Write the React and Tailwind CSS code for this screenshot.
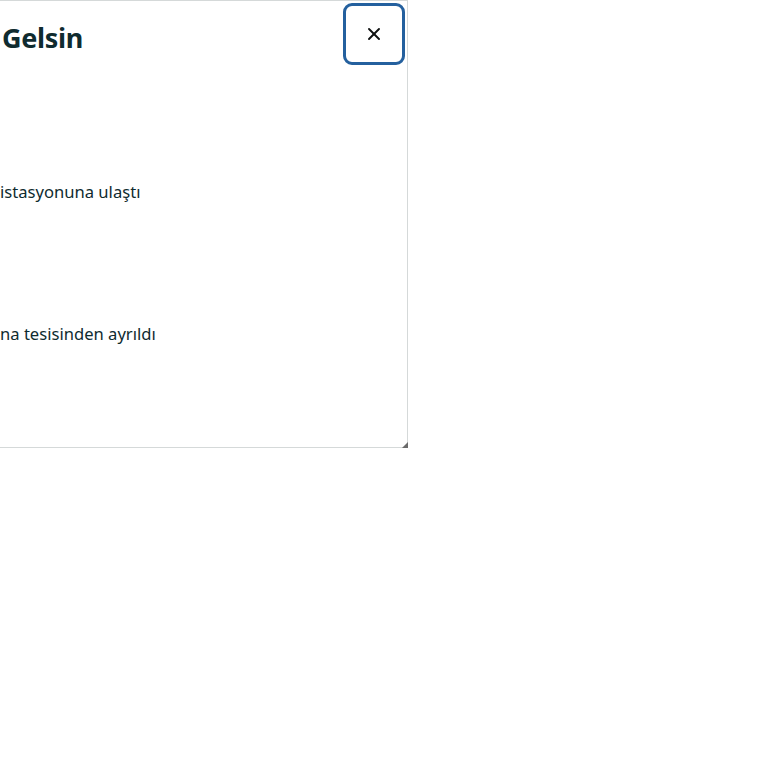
import { X } from "lucide-react";

const font = { fontFamily: '"Noto Sans", "Open Sans", Arial, sans-serif' };

const App = () => {
  return (
    <div className="w-[768px] h-[768px] bg-white" style={font}>
      <div className="relative w-[408px] h-[448px] bg-white border-t border-r border-b border-[#d5d9d9]">
        {/* başlık */}
        <div className="flex justify-between items-start pt-[2px] pr-[2px]">
          <h2 className="pt-[18px] pl-[2px] text-[27px] leading-[34px] font-bold text-[#0f2b2f] tracking-[-0.3px]">
            Gelsin
          </h2>
          <button className="w-[62px] h-[62px] flex items-center justify-center rounded-[9px] border-[3px] border-[#24609e] bg-white">
            <X className="w-[20px] h-[20px] text-[#0f1111]" strokeWidth={2.3} />
          </button>
        </div>

        {/* durumlar */}
        <div className="flex flex-col text-[16.6px] leading-[20px] text-[#0f2b2f]">
          <p className="mt-[117px]">istasyonuna ulaştı</p>
          <p className="mt-[122px]">na tesisinden ayrıldı</p>
        </div>

        <svg className="absolute right-[-1px] bottom-[-1px]" width="6" height="6" viewBox="0 0 6 6">
          <path d="M6 0 L6 6 L0 6 Z" fill="#6b6b6b" />
        </svg>
      </div>
    </div>
  );
};

export default App;
